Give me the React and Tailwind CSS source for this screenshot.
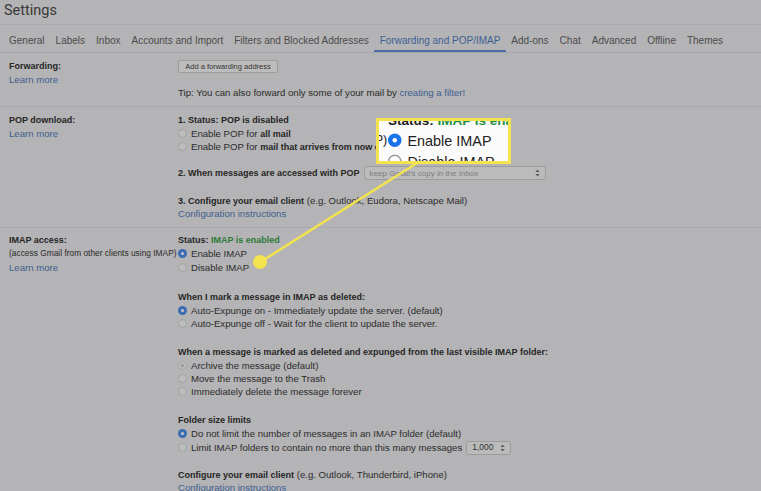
import React from "react";

function Radio({ checked, disabled, bright }) {
  if (checked && disabled) {
    return (
      <span className="w-[9px] h-[9px] rounded-full border border-[#a9a9a9] bg-[#bababa] flex items-center justify-center shrink-0">
        <span className="w-[3px] h-[3px] rounded-full bg-[#9a9a9a]" />
      </span>
    );
  }
  if (checked) {
    return (
      <span className={"w-[9px] h-[9px] rounded-full flex items-center justify-center shrink-0 " + (bright ? "bg-[#1a73e8]" : "bg-[#3a6db3]")}>
        <span className={"w-[3px] h-[3px] rounded-full " + (bright ? "bg-white" : "bg-[#c9c9c9]")} />
      </span>
    );
  }
  return (
    <span className={"w-[9px] h-[9px] rounded-full border shrink-0 " + (bright ? "border-[#9e9e9e] bg-white" : "border-[#a2a2a2] bg-[#bdbdbd]")} />
  );
}

function Row({ children, checked, disabled, h = "h-[13.4px]", bright }) {
  return (
    <div className={"flex items-center gap-[4px] whitespace-nowrap " + h}>
      <Radio checked={checked} disabled={disabled} bright={bright} />
      <span>{children}</span>
    </div>
  );
}

function Arrows() {
  return (
    <svg width="5" height="8" viewBox="0 0 5 8" className="shrink-0">
      <path d="M2.5 0.5 L4.5 3 L0.5 3 Z" fill="#555" />
      <path d="M2.5 7.5 L4.5 5 L0.5 5 Z" fill="#555" />
    </svg>
  );
}

const tabs = [
  "General",
  "Labels",
  "Inbox",
  "Accounts and Import",
  "Filters and Blocked Addresses",
  "Forwarding and POP/IMAP",
  "Add-ons",
  "Chat",
  "Advanced",
  "Offline",
  "Themes",
];

export default function App() {
  return (
    <div
      className="relative w-[761px] h-[491px] overflow-hidden bg-[#b4b3b5] text-[#2c2c2c] text-[9.6px]"
      style={{ fontFamily: '"Liberation Sans", Arial, sans-serif' }}
    >
      {/* Title */}
      <div className="h-[25px] pt-[1px] pl-[4px] border-b border-[#aaa9ab] text-[14.5px] leading-[20px] text-[#3a3a3a]" style={{ fontFamily: 'Roboto, "Liberation Sans", sans-serif' }}>
        Settings
      </div>

      {/* Tabs */}
      <div className="flex pl-[3.5px] border-b border-[#a6a5a7] text-[10px] text-[#4c4c4c]">
        {tabs.map((t) => (
          <div
            key={t}
            className={
              "h-[27px] px-[5.5px] pb-[3px] flex items-end whitespace-nowrap border-b-2 " +
              (t === "Forwarding and POP/IMAP" ? "border-[#4a6ea3] text-[#3d5f94]" : "border-transparent")
            }
          >
            <span className="h-[13px] leading-[13px]">{t}</span>
          </div>
        ))}
      </div>

      {/* Forwarding */}
      <div className="flex pl-[9px] pt-[7px] pb-[7px] border-b border-[#a9a8aa] leading-[13px]">
        <div className="w-[169px] shrink-0">
          <div className="font-bold text-[9px] text-[#262626]">Forwarding:</div>
          <div className="text-[#3f5f90]">Learn more</div>
        </div>
        <div>
          <div className="h-[13px] w-[100px] flex items-center justify-center border border-[#9d9d9d] rounded-[2px] bg-[#bdbdbd] text-[7.5px] text-[#333]">
            Add a forwarding address
          </div>
          <div className="mt-[13px] whitespace-nowrap">
            Tip: You can also forward only some of your mail by <span className="text-[#3f5f90]">creating a filter!</span>
          </div>
        </div>
      </div>

      {/* POP */}
      <div className="flex pl-[9px] pt-[7px] pb-[7.5px] border-b border-[#a9a8aa] leading-[13px]">
        <div className="w-[169px] shrink-0">
          <div className="font-bold text-[9px] text-[#262626]">POP download:</div>
          <div className="text-[#3f5f90]">Learn more</div>
        </div>
        <div>
          <div className="font-bold text-[9px] text-[#262626] h-[13px]">1. Status: POP is disabled</div>
          <Row h="h-[13px]">
            Enable POP for <b className="text-[9px] text-[#262626]">all mail</b>
          </Row>
          <Row h="h-[13px]">
            Enable POP for <b className="text-[9px] text-[#262626]">mail that arrives from now on</b>
          </Row>
          <div className="mt-[13px] h-[14px] flex items-center gap-[4px] whitespace-nowrap">
            <b className="text-[9px] text-[#262626]">2. When messages are accessed with POP</b>
            <div className="h-[14px] w-[182px] flex items-center justify-between pl-[5px] pr-[5px] border border-[#9c9c9c] rounded-[3px] bg-[#bbbbbb] text-[8px] text-[#7d7d7d]">
              <span>keep Gmail's copy in the Inbox</span>
              <Arrows />
            </div>
          </div>
          <div className="mt-[13.5px] h-[13px] whitespace-nowrap">
            <b className="text-[9px] text-[#262626]">3. Configure your email client</b> (e.g. Outlook, Eudora, Netscape Mail)
          </div>
          <div className="h-[13px] text-[#3f5f90]">Configuration instructions</div>
        </div>
      </div>

      {/* IMAP */}
      <div className="flex pl-[9px] pt-[6px] leading-[13px]">
        <div className="w-[169px] shrink-0">
          <div className="font-bold text-[9px] text-[#262626] h-[13px]">IMAP access:</div>
          <div className="h-[13.5px] flex items-center text-[8.4px] whitespace-nowrap">(access Gmail from other clients using IMAP)</div>
          <div className="h-[13.5px] flex items-center text-[#3f5f90]">Learn more</div>
        </div>
        <div>
          <div className="font-bold text-[9px] text-[#262626] h-[13px]">
            Status: <span className="text-[#2f7a3b]">IMAP is enabled</span>
          </div>
          <Row checked h="h-[13.5px]">Enable IMAP</Row>
          <Row h="h-[13.5px]">Disable IMAP</Row>

          <div className="mt-[16.5px] h-[13px] font-bold text-[9px] text-[#262626]">When I mark a message in IMAP as deleted:</div>
          <Row checked h="h-[13.5px]">Auto-Expunge on - Immediately update the server. (default)</Row>
          <Row h="h-[13.5px]">Auto-Expunge off - Wait for the client to update the server.</Row>

          <div className="mt-[15px] h-[13px] font-bold text-[9px] text-[#262626] whitespace-nowrap">
            When a message is marked as deleted and expunged from the last visible IMAP folder:
          </div>
          <Row checked disabled>Archive the message (default)</Row>
          <Row>Move the message to the Trash</Row>
          <Row>Immediately delete the message forever</Row>

          <div className="mt-[15.5px] h-[13px] font-bold text-[9px] text-[#262626]">Folder size limits</div>
          <Row checked h="h-[13.5px]">Do not limit the number of messages in an IMAP folder (default)</Row>
          <div className="h-[14px] flex items-center gap-[4px] whitespace-nowrap">
            <Radio />
            <span>Limit IMAP folders to contain no more than this many messages</span>
            <div className="h-[14px] w-[45px] flex items-center justify-between pl-[5px] pr-[5px] border border-[#9c9c9c] rounded-[3px] bg-[#bbbbbb] text-[8.5px] text-[#333]">
              <span>1,000</span>
              <Arrows />
            </div>
          </div>
          <div className="mt-[13.5px] h-[13px] whitespace-nowrap">
            <b className="text-[9px] text-[#262626]">Configure your email client</b> (e.g. Outlook, Thunderbird, iPhone)
          </div>
          <div className="h-[13px] text-[#3f5f90]">Configuration instructions</div>
        </div>
      </div>

      {/* Connector line and dot */}
      <svg className="absolute left-0 top-0 pointer-events-none" width="761" height="491">
        <line x1="417" y1="163" x2="262" y2="261" stroke="#f3e34f" strokeWidth="2.5" strokeLinecap="round" />
        <circle cx="260" cy="262" r="7" fill="#f3e34f" />
      </svg>

      {/* Magnifier box */}
      <div className="absolute left-[376px] top-[118px] w-[135px] h-[46px] border-[3px] border-[#f3e34f] bg-[#fbfbfb] overflow-hidden">
        <div className="absolute left-[9px] top-[-10px] origin-top-left scale-150 leading-[13px] text-[9.6px] text-[#202020] w-[200px]">
          <div className="font-bold text-[9px] h-[13px] whitespace-nowrap">
            Status: <span className="text-[#1e8e3e]">IMAP is enabled</span>
          </div>
          <div className="relative">
            <span className="absolute right-full top-0 h-[13.5px] flex items-center pr-[0.5px] text-[8.4px] whitespace-nowrap">
              (access Gmail from other clients using IMAP)
            </span>
            <Row checked bright h="h-[13.5px]">Enable IMAP</Row>
          </div>
          <Row bright h="h-[13.5px]">Disable IMAP</Row>
        </div>
      </div>
    </div>
  );
}
